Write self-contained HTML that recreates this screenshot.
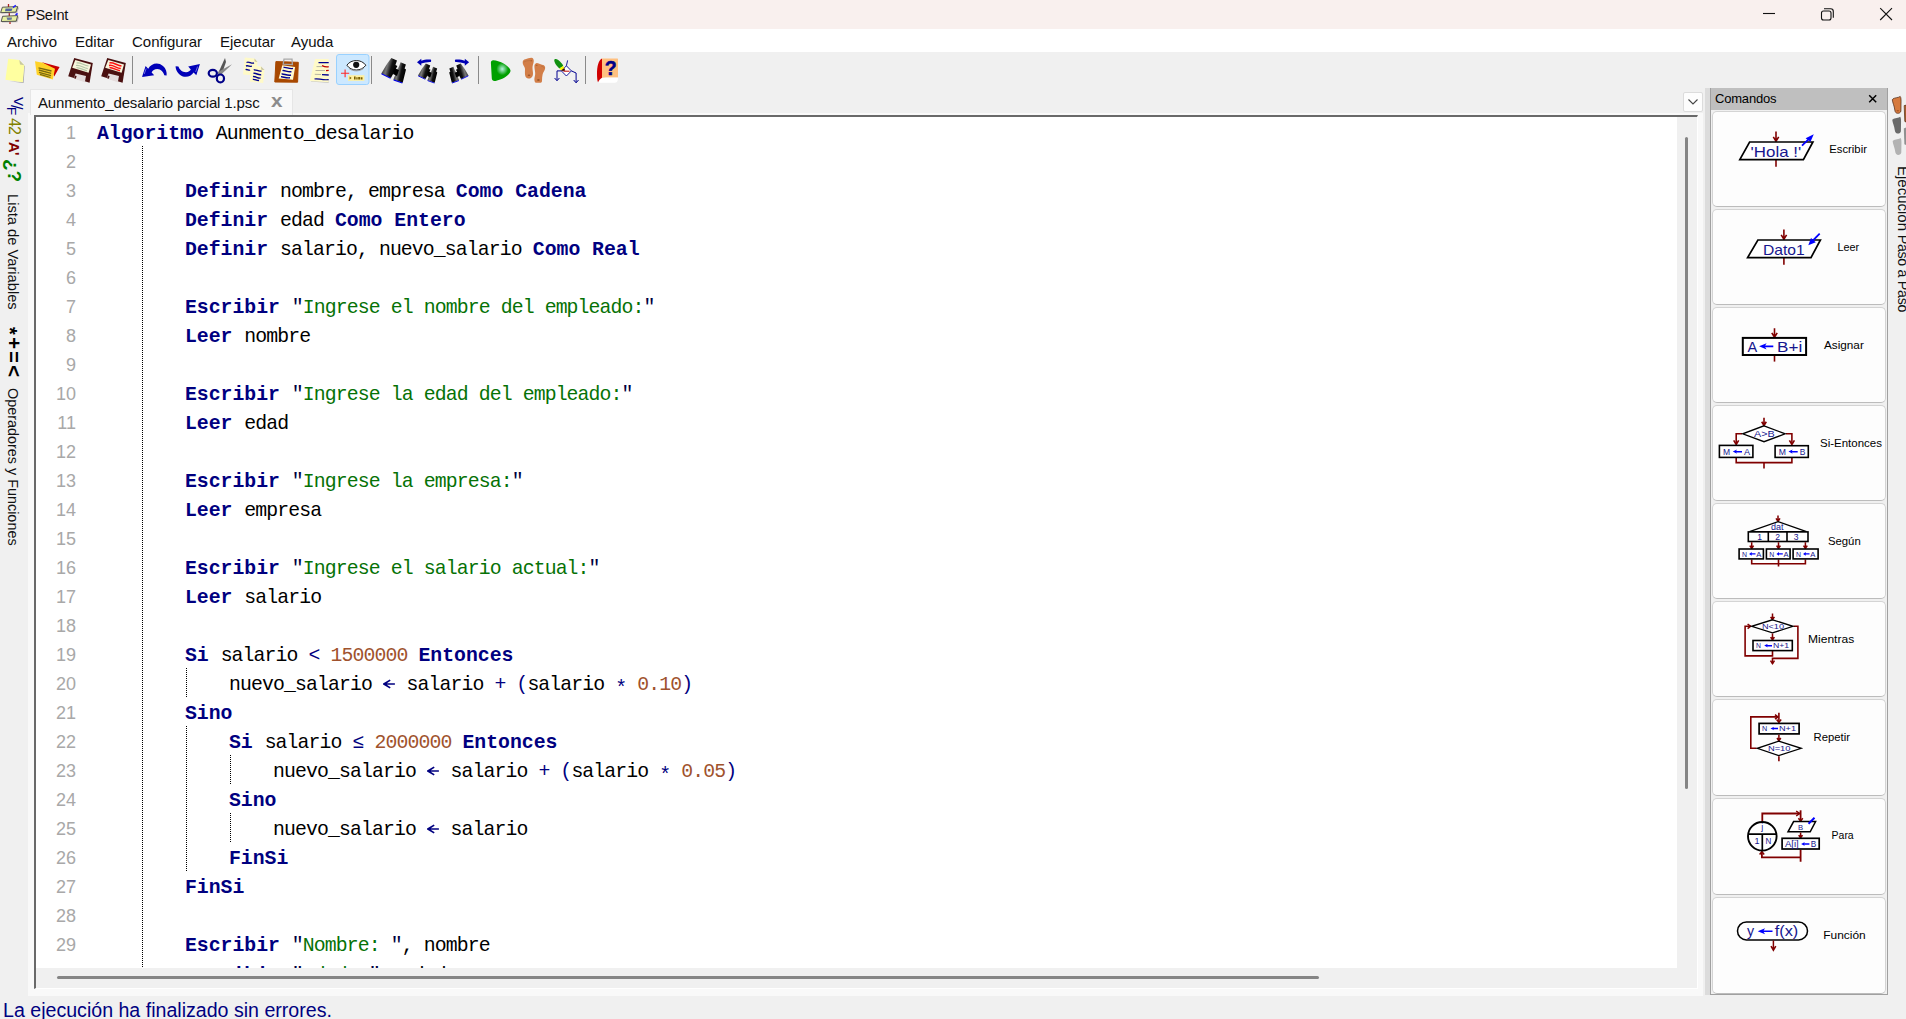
<!DOCTYPE html>
<html>
<head>
<meta charset="utf-8">
<title>PSeInt</title>
<style>
html,body{margin:0;padding:0;overflow:hidden;width:1906px;height:1019px;}
#root{position:absolute;left:0;top:0;width:1906px;height:1019px;overflow:hidden;background:#f0f0f0;}
body{width:1906px;height:1019px;overflow:hidden;background:#f0f0f0;font-family:"Liberation Sans",sans-serif;position:relative;color:#000;}
div,span{box-sizing:border-box;}
.abs{position:absolute;}
/* title bar */
#title{position:absolute;left:0;top:0;width:1906px;height:29px;background:#f9f0ee;}
#title .t{position:absolute;left:26px;top:5.6px;font-size:14.6px;letter-spacing:-0.3px;line-height:19px;color:#111;}
/* menu */
#menu{position:absolute;left:0;top:29px;width:1906px;height:23px;background:#fff;}
#menu span{position:absolute;top:3px;font-size:15px;line-height:19px;color:#111;}
/* toolbar */
#tool{position:absolute;left:0;top:52px;width:1906px;height:36px;background:#f0f0f0;}
.sep{position:absolute;top:4px;width:1px;height:28px;background:#a0a0a0;}
.ic{position:absolute;top:6px;width:24px;height:24px;}
/* notebook */
#page{position:absolute;left:28px;top:113px;width:1675px;height:883px;background:#f9f9f9;}
#tab{position:absolute;left:30px;top:89px;width:263px;height:26px;background:#f9f9f9;border:1px solid #e6e6e6;border-bottom:none;}
#tab .t{position:absolute;left:7px;top:4px;font-size:15px;letter-spacing:-0.14px;line-height:18px;color:#111;white-space:nowrap;}
#tab .x{position:absolute;left:240px;top:2px;font-size:18px;line-height:18px;color:#8c8c8c;font-weight:bold;transform:scaleX(1.15);transform-origin:0 0;}
#ed{position:absolute;left:34px;top:115px;width:1664px;height:874px;border-top:2px solid #696969;border-left:2px solid #696969;border-right:1px solid #fff;border-bottom:1px solid #fff;background:#f0f0f0;overflow:hidden;}
#edw{position:absolute;left:0;top:0;width:1641px;height:851px;background:#fff;overflow:hidden;}
.ln{position:absolute;left:0;height:29px;width:1641px;white-space:nowrap;}
.no{position:absolute;left:0;top:1px;width:40px;text-align:right;font-family:"Liberation Sans",sans-serif;font-size:18px;line-height:29px;color:#a8a8a8;padding-top:1px;}
.tx{position:absolute;left:61px;top:0;font-family:"Liberation Mono",monospace;font-size:19.8px;line-height:29px;letter-spacing:-0.88px;height:29px;padding-top:3px;}
.tx span{display:inline-block;vertical-align:top;height:29px;}
.sp{display:inline-block;height:1px;}
.k{font-weight:bold;color:#000080;letter-spacing:0;}
.i{color:#000;}
.g{color:#067206;}
.q{color:#000040;}
.n{color:#a0522d;}
.o{color:#000080;}
.ar{width:12.6px;position:relative;}
.st{color:#000080;position:relative;top:3.5px;}
.ar svg{position:absolute;left:0;top:7.6px;}
.guide{position:absolute;width:1px;background-image:linear-gradient(#000 50%,transparent 50%);background-size:1px 2px;}
/* scrollbars */
#vth{position:absolute;left:1649px;top:20px;width:3px;height:652px;background:#858585;border-radius:2px;}
#hth{position:absolute;left:21px;top:859px;width:1262px;height:3px;background:#858585;border-radius:2px;}
/* left sidebar */
.vt{position:absolute;transform-origin:0 0;transform:rotate(90deg);white-space:nowrap;}
/* status */
#status{position:absolute;left:3px;top:999px;font-size:19.6px;line-height:23px;color:#000080;white-space:nowrap;}
/* commands panel */
#split{position:absolute;left:1705px;top:88px;width:5px;height:907px;background:#dcdcdc;}
#cmd{position:absolute;left:1710px;top:88px;width:178px;height:907px;background:#f0f0f0;border-left:1px solid #a0a0a0;border-right:1px solid #a0a0a0;border-bottom:1px solid #a0a0a0;}
#cmdh{position:absolute;left:0;top:0;width:176px;height:22px;background:#bfbfbf;}
#cmdh .t{position:absolute;left:4px;top:3px;font-size:13px;line-height:16px;color:#000;letter-spacing:-0.2px;}
.cb{position:absolute;left:1px;width:174px;height:96px;background:#fdfdfd;border:1px solid #d4d4d4;border-bottom-color:#bcbcbc;border-radius:5px;}
.cb .l{position:absolute;top:29px;font-size:11.5px;line-height:14px;white-space:nowrap;color:#000;}
.cb svg{position:absolute;left:0;top:0;}
#dd{position:absolute;left:1683px;top:92px;width:20px;height:20px;background:#fdfdfd;border:1px solid #dcdcdc;border-radius:2px;}
</style>
</head>
<body>
<div id="root">
<div id="title"><span class="t">PSeInt</span>
<svg class="abs" style="left:0;top:0" width="24" height="29" viewBox="0 0 24 29">
<path d="M8.5 4 L8.5 7.4 M9.3 12.6 L9.3 16 M10 21.3 L10 24" stroke="#b02020" stroke-width="1.3"/>
<path d="M3.4 8.4 L19.2 7.6 L17 13.3 L1.6 13.6 Z" fill="#9a9a9a" opacity=".6"/>
<path d="M2.4 7.2 L17.7 6.6 L15.9 12.1 L0.6 12.7 Z" fill="#e6f0a0" stroke="#444" stroke-width="0.9"/>
<path d="M3.6 17.4 L19.2 16.6 L17.4 22.2 L2 22.5 Z" fill="#9a9a9a" opacity=".6"/>
<path d="M2.6 16.3 L17.7 15.6 L16.2 21.2 L1.2 21.5 Z" fill="#e6f0a0" stroke="#444" stroke-width="0.9"/>
<path d="M5.5 8.6 L12.5 8.4 L11.5 11 L5 11.2 Z" fill="#3040a0" opacity=".8"/>
<path d="M6.5 17.6 L12 17.4 L11.6 19.8 L7.4 20 Z" fill="#3040a0" opacity=".7"/>
<path d="M13 7.6 L15.8 5.2" stroke="#2020ff" stroke-width="1.5"/>
<path d="M15.6 15.2 L17.6 13.4" stroke="#2020ff" stroke-width="1.6"/>
</svg>
<svg class="abs" style="left:1750px;top:0" width="156" height="29" viewBox="1750 0 156 29">
<path d="M1763 13.5 L1775 13.5" stroke="#111" stroke-width="1.1"/>
<rect x="1821.5" y="11" width="9.5" height="9" rx="2" fill="none" stroke="#111" stroke-width="1.1"/>
<path d="M1824 8.8 L1830.6 8.8 C1832.2 8.8 1833.3 9.9 1833.3 11.5 L1833.3 17.8" fill="none" stroke="#111" stroke-width="1.1"/>
<path d="M1880.2 8.2 L1892 20 M1892 8.2 L1880.2 20" stroke="#111" stroke-width="1.1"/>
</svg>

</div>
<div id="menu"><span style="left:7px">Archivo</span><span style="left:75px">Editar</span><span style="left:132px">Configurar</span><span style="left:220px">Ejecutar</span><span style="left:291px">Ayuda</span></div>
<div id="tool">
<svg class="abs" style="left:0;top:0" width="640" height="38" viewBox="0 52 640 38">
<defs>
<linearGradient id="gb" x1="0" y1="0" x2="1" y2="0.35"><stop offset="0" stop-color="#000"/><stop offset="0.45" stop-color="#777"/><stop offset="0.7" stop-color="#111"/><stop offset="1" stop-color="#000"/></linearGradient>
<radialGradient id="gr" cx="0.58" cy="0.42" r="0.3"><stop offset="0" stop-color="#b8f0e0"/><stop offset="1" stop-color="#00a000"/></radialGradient>
</defs>
<!-- new -->
<path d="M9.2 81.2 L23.6 83 L24.8 66 L24 65.5 L22.6 82 Z" fill="#8a8a90" opacity=".7"/>
<path d="M8.2 58.8 L19.3 59.9 L24.3 65.2 L22.8 82.3 L5.4 79.8 Z" fill="#ffffa0"/>
<path d="M19.3 59.9 L24.3 65.2 L20 64.6 Z" fill="#c8c8a0"/>
<!-- open -->
<path d="M42 62.2 L59.6 67 L54.2 76.5 L52 70 Z" fill="#c80000"/>
<path d="M35 61.3 L42.8 62.7 L55 68.8 L52.8 79.5 L36.8 74.8 Z" fill="#ffd228"/>
<path d="M38.5 67.8 L51.5 71 M38.8 70 L51.2 73.3 M39 72.3 L51 75.6 M40 74.4 L50.5 77.5" stroke="#7a6a10" stroke-width="1.3" fill="none"/>
<!-- save -->
<g id="flop">
<path d="M74.2 58 L92.8 63 L89.6 82.7 L68.2 76.3 Z" fill="#4a1010"/>
<path d="M75.3 60 L91 64.5 L88.6 72.7 L72.2 67.8 Z" fill="#f7f5dc"/>
<path d="M75.6 73.6 L86 76 L84.8 82.2 L73.6 78.6 Z" fill="#e4dcdc"/>
<path d="M74.8 75.5 L76.6 76 L75.9 78.8 L74.1 78.2 Z" fill="#4a1010"/>
</g>
<path d="M76.5 63 C80 62 84 65.5 88.5 66 M76 65.5 C80 64.5 83 68 87.8 68.6 M76.5 67.6 C80 67.5 83 70 87 70.8" stroke="#b4c8a8" stroke-width="1.2" fill="none"/>
<!-- save as -->
<use href="#flop" x="33" y="0"/>
<path d="M109.5 63 C113 62 117 65.5 121.5 66 M109 65.5 C113 64.5 116 68 120.8 68.6 M109.5 67.6 C113 67.5 116 70 120 70.8" stroke="#ff1010" stroke-width="1.5" fill="none"/>
<rect x="132" y="56" width="1" height="28" fill="#8a8a8a"/>
<!-- undo -->
<path d="M142 77 L145.6 66 L148.2 68.8 C151 63.5 158 61.5 163 66 C166 68.5 167 72 166.6 75.5 L164.3 75.3 C163.5 72 161 69.2 157.3 69 C154.5 69 152.6 70.4 151.6 72.4 L154.2 75.2 Z" fill="#0000b8"/>
<path d="M144.2 74 L146.2 68.5" stroke="#6a6ae0" stroke-width="1" fill="none"/>
<!-- redo -->
<path d="M199.9 64.1 L196.3 75.2 L193.6 72.5 C190.5 77.5 183.5 78.5 179 74 C176.5 71.5 175.5 68.5 175.6 66.3 L178.4 66.5 C179.5 69.5 182 72.2 186 72.2 C188.5 72.2 190 71 190.8 69.6 L188.2 66.6 Z" fill="#0000b8"/>
<path d="M197.6 66.5 L195.6 72" stroke="#6a6ae0" stroke-width="1" fill="none"/>
<!-- cut -->
<path d="M218 73.5 L225 58 L226 62 L221.6 74.6 Z" fill="#555"/>
<path d="M217 72.5 L232 64.3 L229 67.2 L220.5 75 Z" fill="#888"/>
<ellipse cx="212.8" cy="73.2" rx="4.1" ry="3.4" fill="none" stroke="#000088" stroke-width="2.2"/>
<ellipse cx="220.4" cy="78.4" rx="3.6" ry="3.9" fill="none" stroke="#000088" stroke-width="2.2"/>
<!-- copy -->
<path d="M244.8 57.4 L254.5 58.5 L257.5 62 L256.6 75.5 L243 74.5 Z" fill="#fffac8"/>
<path d="M254.5 58.5 L257.5 62 L254.6 61.6 Z" fill="#c8c4a0"/>
<path d="M246.5 62.5 C249 61 251 64 254 63 M246 66 C248 65 250 67 252 66.2 M245.6 69.6 C247 69 249 70.6 250 70" stroke="#000090" stroke-width="1.4" fill="none"/>
<path d="M252 65.6 L261 66.6 L264.5 70 L263.2 83 L249.6 81.5 Z" fill="#fffac8"/>
<path d="M261 66.6 L264.5 70 L261.3 69.8 Z" fill="#c8c4a0"/>
<path d="M253.8 70 C256 69 258.5 72 261.5 71 M253.4 73.4 C256 72.5 258.5 75.5 261.2 74.6 M253 76.6 C255.5 76 258 78.8 260.6 78 M252.8 79.4 C255 79 257 81 259 80.4" stroke="#000090" stroke-width="1.4" fill="none"/>
<!-- paste -->
<path d="M275.9 61.6 L298.3 62.3 L297.6 82.2 L274.8 82 Z" fill="#a84800" stroke="#a84800" stroke-width="1" stroke-linejoin="round"/>
<path d="M282.3 65.2 L295.1 67 L293 79.8 L278.7 78.4 Z" fill="#fffad2"/>
<path d="M284 59.2 L292 59.2 L292.4 64.6 L283.2 64.2 Z" fill="none" stroke="#a8a8a8" stroke-width="1.3"/>
<path d="M283.5 67.5 C286 66.5 289 69.5 293 68.4 M282.5 70.6 C285 70 288 72.6 291.5 71.6 M281.6 74 C284 73.5 287 76 291 75 M281 76.8 C283 76.5 286 78.5 290 77.8" stroke="#000090" stroke-width="1.4" fill="none"/>
<!-- format -->
<path d="M311 81.6 L328.7 83 L328.7 81 L311 80 Z" fill="#b0b0b0" opacity=".7"/>
<path d="M315.1 59.1 L328.7 59.1 L328.7 82.3 L309.8 80.9 Z" fill="#fffac8"/>
<path d="M318.5 62.6 L328.7 62.6 M314.5 79 C318 78 322 80.5 328.7 79.6" stroke="#000090" stroke-width="1.2" fill="none"/>
<path d="M322 65.6 C324 66.5 326 67.4 328.7 66.6 M326 70.6 L328.7 70.4" stroke="#c00000" stroke-width="1.4" fill="none"/>
<path d="M316.5 66.6 L322 66.6 M315.5 70.5 L325 70.5 M314.8 74.3 L321 74.5" stroke="#b8b4a0" stroke-width="1" fill="none"/>
<path d="M322 74.6 L328.7 75" stroke="#000090" stroke-width="1.3" fill="none"/>
<!-- eye (selected) -->
<rect x="336.5" y="54.5" width="32.5" height="30" rx="2.5" fill="#cce8ff" stroke="#99d1ff" stroke-width="1"/>
<path d="M346.9 65.2 C351 59 361.5 59 365.8 65.2 C361.5 71.6 351 71.6 346.9 65.2 Z" fill="#fff" stroke="#222" stroke-width="1"/>
<path d="M349 68.4 C353 71.6 359.5 71.6 363.6 68.4" stroke="#999" stroke-width="1" fill="none"/>
<circle cx="356.2" cy="64.8" r="3.1" fill="#111"/>
<path d="M341 73.3 L349.2 73.3 M345.1 69.4 L345.1 77.2" stroke="#ff2828" stroke-width="1.1"/>
<rect x="348" y="75.2" width="16.4" height="5.6" fill="#fff0a0"/>
<path d="M349.6 76.6 L351.6 78 L349.6 79.4 Z M354 76.5 h1.6 v3 h-1.6 Z M356.3 77.3 h1.3 v2.2 h-1.3 Z M358.2 77 h2 v2.5 h-2 Z M360.8 77.3 h1.7 v2.2 h-1.7 Z" fill="#7a6000"/>
<rect x="371" y="56" width="1" height="28" fill="#8a8a8a"/>
<!-- find -->
<g id="bino">
<path d="M391.3 58 L397 60.6 L395.4 65 L397.4 66 L390.9 78 L381.3 73.4 L386 65.4 L388 62.6 Z" fill="url(#gb)"/>
<path d="M400.6 62.3 L405.9 64.5 L404.6 68.4 L406 69.4 L402.7 82.7 L393.4 79.5 L397.6 69 L399 66.4 Z" fill="url(#gb)"/>
<path d="M394 68 L399 70 L397 76 L393 74 Z" fill="#000"/>
<path d="M381.5 73.8 L390.6 78.2 M393.6 79.9 L402.4 83" stroke="#0000e0" stroke-width="1.2" fill="none"/>
</g>
<!-- find prev -->
<g transform="translate(418,63.5) scale(0.78) translate(-381.3,-58)">
<use href="#bino"/>
</g>
<path d="M417 62.3 L421.3 58.8 L421.3 60.8 C424 59.6 428 59.2 430.6 59.6 C431.4 60 431.4 61.6 430.6 62 C428 61.8 424 62.6 421.3 63.6 L421.3 65.8 Z" fill="#0000b4"/>
<!-- find next -->
<g transform="translate(468.5,63.5) scale(-0.78,0.78) translate(-381.3,-58)">
<use href="#bino"/>
</g>
<path d="M469.1 62.3 L464.8 58.8 L464.8 60.8 C462 59.6 458 59.2 455.5 59.6 C454.7 60 454.7 61.6 455.5 62 C458 61.8 462 62.6 464.8 63.6 L464.8 65.8 Z" fill="#0000b4"/>
<rect x="478" y="56" width="1" height="28" fill="#8a8a8a"/>
<!-- run -->
<path d="M493.4 60.3 C491.6 60.2 490.8 61.4 490.9 63 L491.8 78.6 C492 80.6 493.4 81.4 495.6 80.9 C502 79.4 507.6 76.4 510 72.4 C510.7 71.2 510.7 70.2 509.9 69 C506.6 64.4 499.6 60.8 493.4 60.3 Z" fill="url(#gr)"/>
<!-- step feet -->
<path d="M522.7 62.3 C522.6 60.6 524 59.6 525.3 59.3 C527.4 58.6 529.4 57.8 531.3 57.7 C533.2 57.8 534 59.6 533.7 61.7 C533.4 63.6 532.6 65.4 532.5 67.3 C532.4 69.6 533.1 71.8 533 74 C532.9 75.2 532.6 76.2 532 77 C531.3 77.9 530.4 78.5 529.3 78.5 C527.9 78.5 526.6 78 525.7 77 C524.6 75.2 525 71.6 525 69 C525 67.4 524 66.4 523.3 65 C522.9 64.2 522.7 63.2 522.7 62.3 Z" fill="#d27e48"/>
<path d="M536.7 63 C535.2 63.4 534.3 64.8 534.4 66.7 C534.5 69.2 535.3 71.6 535.2 74 C535.1 76 534.2 78 534.4 80 C534.6 81.6 535 82.6 536 82.7 L540.7 82.7 C541.6 82.4 542 81.6 542 80.7 C542 78.4 542.2 76.2 542.7 74 C543.2 72.2 544.6 70.8 545 69 C545.2 68.2 545.2 67.4 545 66.7 C544.6 65.4 543.4 64.9 542 64.7 C540.2 64.2 538.4 63 536.7 63 Z" fill="#d27e48"/>
<ellipse cx="529" cy="75.3" rx="1.3" ry="0.8" fill="#9a5426"/><ellipse cx="538.4" cy="80" rx="1.4" ry="0.8" fill="#8a4a20"/>
<ellipse cx="531.2" cy="60.7" rx="0.9" ry="0.8" fill="#b0602c"/><ellipse cx="536.7" cy="65.3" rx="1" ry="0.6" fill="#b0602c"/>
<path d="M523.6 62.2 C525.4 61 528 60.6 530 60.6 M541 66 C542.4 66.4 543.6 67 544.4 67.8" stroke="#b87040" stroke-width="0.7" fill="none"/>
<!-- flow -->
<path d="M566.4 65.8 L571.4 70.9 L566.4 76 L561.4 70.9 Z" fill="#fff" stroke="#000090" stroke-width="0.9"/>
<path d="M566.4 65.8 L567.6 60.4" stroke="#000090" stroke-width="0.9" fill="none"/>
<path d="M561.4 70.9 L557 70.9 L557 80 M571.4 70.9 L576.1 73 L576.1 82" stroke="#000090" stroke-width="1" fill="none"/>
<path d="M554.6 78 L557 80.8 L559.4 78 M573.7 80 L576.1 82.9 L578.5 80" stroke="#000090" stroke-width="1" fill="none"/>
<path d="M563.4 71.2 L569.6 71.2" stroke="#c00000" stroke-width="1"/>
<path d="M554.4 59.6 C556 58.4 558 59.6 560 61.6 C561.6 63.2 562.8 64.6 563.2 66 L559.4 68.4 C557.4 66.8 555.4 64.6 554.8 62.6 C554.5 61.6 554 60.4 554.4 59.6 Z" fill="#109010"/>
<path d="M559.4 68.4 L563.2 66 L564.4 68 L561.2 70.4 Z" fill="#f8f800"/>
<path d="M561.2 70.4 L564.4 68 L565.2 70.4 L563 71 Z" fill="#400000"/>
<rect x="585" y="56" width="1" height="28" fill="#8a8a8a"/>
<!-- help -->
<path d="M602 58.4 L617.2 58.4 C617.8 58.4 618 58.8 618 59.4 L618 77.8 L602 77.8 Z" fill="#ffc080"/>
<path d="M599.4 79.4 C601 77.6 604 77.6 618 77.6 C618 80 617.4 82.8 615 82.8 L599 82.8 Z" fill="#fff"/>
<path d="M602 58.4 C598.6 60 597 66 597 74 C597 78 597.4 81 598 82.2 C599 80.4 600.6 78.4 602 77.8 Z" fill="#d00000"/>
<text x="610.8" y="74.6" font-family="Liberation Sans, sans-serif" font-weight="bold" font-size="19.5" fill="#000088" stroke="#000088" stroke-width="0.5" text-anchor="middle">?</text>
</svg>

</div>
<div class="vt" style="left:27px;top:97px;height:18px;font-size:13.5px;line-height:18px;color:#000080;">V</div>
<div class="vt" style="left:25px;top:104.5px;height:18px;font-size:16px;line-height:18px;color:#000080;">/</div>
<div class="vt" style="left:20px;top:107px;height:18px;font-size:13.5px;line-height:18px;color:#000080;">F</div>
<div class="vt" style="left:23px;top:118px;height:18px;font-size:16px;line-height:18px;color:#808000;letter-spacing:-0.8px">42</div>
<div class="vt" style="left:23px;top:138.5px;height:18px;font-size:15px;line-height:18px;color:#800000;font-weight:bold;letter-spacing:-0.7px">'A'</div>
<div class="vt" style="left:23px;top:159px;height:18px;font-size:19px;line-height:18px;color:#008000;font-weight:bold;"><span style="position:relative;top:2px">¿</span>?</div>
<div class="vt" style="left:22px;top:194px;height:18px;font-size:14.7px;line-height:18px;color:#111;">Lista de Variables</div>
<div class="vt" style="left:23px;top:326.5px;height:18px;font-size:20px;line-height:18px;font-weight:bold;color:#000;letter-spacing:2.4px"><span style="position:relative;top:4px">*</span>+=&lt;</div>
<div class="vt" style="left:22px;top:388px;height:18px;font-size:14.4px;line-height:18px;color:#111;">Operadores y Funciones</div>

<div id="page"></div>
<div id="tab"><span class="t">Aunmento_desalario parcial 1.psc</span><span class="x">x</span></div>
<div id="dd"><svg width="18" height="18" viewBox="0 0 18 18" style="position:absolute;left:0;top:0"><path d="M4.5 6.5 L9 11 L13.5 6.5" fill="none" stroke="#444" stroke-width="1.1"/></svg></div>
<div id="ed">
 <div id="edw">
<div class="ln" style="top:0px"><span class="no">1</span><span class="tx"><span class="k">Algoritmo&nbsp;</span><span class="i">Aunmento_desalario</span></span></div>
<div class="ln" style="top:29px"><span class="no">2</span><span class="tx"></span></div>
<div class="ln" style="top:58px"><span class="no">3</span><span class="tx"><span class="sp" style="width:88px"></span><span class="k">Definir&nbsp;</span><span class="i">nombre,&nbsp;empresa&nbsp;</span><span class="k">Como&nbsp;Cadena</span></span></div>
<div class="ln" style="top:87px"><span class="no">4</span><span class="tx"><span class="sp" style="width:88px"></span><span class="k">Definir&nbsp;</span><span class="i">edad&nbsp;</span><span class="k">Como&nbsp;Entero</span></span></div>
<div class="ln" style="top:116px"><span class="no">5</span><span class="tx"><span class="sp" style="width:88px"></span><span class="k">Definir&nbsp;</span><span class="i">salario,&nbsp;nuevo_salario&nbsp;</span><span class="k">Como&nbsp;Real</span></span></div>
<div class="ln" style="top:145px"><span class="no">6</span><span class="tx"></span></div>
<div class="ln" style="top:174px"><span class="no">7</span><span class="tx"><span class="sp" style="width:88px"></span><span class="k">Escribir&nbsp;</span><span class="q">&quot;</span><span class="g">Ingrese&nbsp;el&nbsp;nombre&nbsp;del&nbsp;empleado:</span><span class="q">&quot;</span></span></div>
<div class="ln" style="top:203px"><span class="no">8</span><span class="tx"><span class="sp" style="width:88px"></span><span class="k">Leer&nbsp;</span><span class="i">nombre</span></span></div>
<div class="ln" style="top:232px"><span class="no">9</span><span class="tx"></span></div>
<div class="ln" style="top:261px"><span class="no">10</span><span class="tx"><span class="sp" style="width:88px"></span><span class="k">Escribir&nbsp;</span><span class="q">&quot;</span><span class="g">Ingrese&nbsp;la&nbsp;edad&nbsp;del&nbsp;empleado:</span><span class="q">&quot;</span></span></div>
<div class="ln" style="top:290px"><span class="no">11</span><span class="tx"><span class="sp" style="width:88px"></span><span class="k">Leer&nbsp;</span><span class="i">edad</span></span></div>
<div class="ln" style="top:319px"><span class="no">12</span><span class="tx"></span></div>
<div class="ln" style="top:348px"><span class="no">13</span><span class="tx"><span class="sp" style="width:88px"></span><span class="k">Escribir&nbsp;</span><span class="q">&quot;</span><span class="g">Ingrese&nbsp;la&nbsp;empresa:</span><span class="q">&quot;</span></span></div>
<div class="ln" style="top:377px"><span class="no">14</span><span class="tx"><span class="sp" style="width:88px"></span><span class="k">Leer&nbsp;</span><span class="i">empresa</span></span></div>
<div class="ln" style="top:406px"><span class="no">15</span><span class="tx"></span></div>
<div class="ln" style="top:435px"><span class="no">16</span><span class="tx"><span class="sp" style="width:88px"></span><span class="k">Escribir&nbsp;</span><span class="q">&quot;</span><span class="g">Ingrese&nbsp;el&nbsp;salario&nbsp;actual:</span><span class="q">&quot;</span></span></div>
<div class="ln" style="top:464px"><span class="no">17</span><span class="tx"><span class="sp" style="width:88px"></span><span class="k">Leer&nbsp;</span><span class="i">salario</span></span></div>
<div class="ln" style="top:493px"><span class="no">18</span><span class="tx"></span></div>
<div class="ln" style="top:522px"><span class="no">19</span><span class="tx"><span class="sp" style="width:88px"></span><span class="k">Si&nbsp;</span><span class="i">salario&nbsp;</span><span class="o">&lt;&nbsp;</span><span class="n">1500000&nbsp;</span><span class="k">Entonces</span></span></div>
<div class="ln" style="top:551px"><span class="no">20</span><span class="tx"><span class="sp" style="width:132px"></span><span class="i">nuevo_salario&nbsp;</span><span class="ar"><svg width="13" height="10" viewBox="0 0 13 10"><path d="M1 5 L11.9 5 M7.2 1.1 L1 5 L7.2 8.9" fill="none" stroke="#000080" stroke-width="1.7" stroke-linejoin="miter"/></svg></span><span class="i">&nbsp;salario&nbsp;</span><span class="o">+&nbsp;(</span><span class="i">salario&nbsp;</span><span class="st">*</span><span class="o">&nbsp;</span><span class="n">0.10</span><span class="o">)</span></span></div>
<div class="ln" style="top:580px"><span class="no">21</span><span class="tx"><span class="sp" style="width:88px"></span><span class="k">Sino</span></span></div>
<div class="ln" style="top:609px"><span class="no">22</span><span class="tx"><span class="sp" style="width:132px"></span><span class="k">Si&nbsp;</span><span class="i">salario&nbsp;</span><span class="o">≤&nbsp;</span><span class="n">2000000&nbsp;</span><span class="k">Entonces</span></span></div>
<div class="ln" style="top:638px"><span class="no">23</span><span class="tx"><span class="sp" style="width:176px"></span><span class="i">nuevo_salario&nbsp;</span><span class="ar"><svg width="13" height="10" viewBox="0 0 13 10"><path d="M1 5 L11.9 5 M7.2 1.1 L1 5 L7.2 8.9" fill="none" stroke="#000080" stroke-width="1.7" stroke-linejoin="miter"/></svg></span><span class="i">&nbsp;salario&nbsp;</span><span class="o">+&nbsp;(</span><span class="i">salario&nbsp;</span><span class="st">*</span><span class="o">&nbsp;</span><span class="n">0.05</span><span class="o">)</span></span></div>
<div class="ln" style="top:667px"><span class="no">24</span><span class="tx"><span class="sp" style="width:132px"></span><span class="k">Sino</span></span></div>
<div class="ln" style="top:696px"><span class="no">25</span><span class="tx"><span class="sp" style="width:176px"></span><span class="i">nuevo_salario&nbsp;</span><span class="ar"><svg width="13" height="10" viewBox="0 0 13 10"><path d="M1 5 L11.9 5 M7.2 1.1 L1 5 L7.2 8.9" fill="none" stroke="#000080" stroke-width="1.7" stroke-linejoin="miter"/></svg></span><span class="i">&nbsp;salario</span></span></div>
<div class="ln" style="top:725px"><span class="no">26</span><span class="tx"><span class="sp" style="width:132px"></span><span class="k">FinSi</span></span></div>
<div class="ln" style="top:754px"><span class="no">27</span><span class="tx"><span class="sp" style="width:88px"></span><span class="k">FinSi</span></span></div>
<div class="ln" style="top:783px"><span class="no">28</span><span class="tx"></span></div>
<div class="ln" style="top:812px"><span class="no">29</span><span class="tx"><span class="sp" style="width:88px"></span><span class="k">Escribir&nbsp;</span><span class="q">&quot;</span><span class="g">Nombre:&nbsp;</span><span class="q">&quot;</span><span class="i">,&nbsp;nombre</span></span></div>
<div class="ln" style="top:842px"><span class="no">30</span><span class="tx"><span class="sp" style="width:88px"></span><span class="k">Escribir&nbsp;</span><span class="q">&quot;</span><span class="g">Edad:&nbsp;</span><span class="q">&quot;</span><span class="i">,&nbsp;edad</span></span></div>
  <div class="guide" style="left:106px;top:29px;height:830px"></div>
  <div class="guide" style="left:150px;top:551px;height:29px"></div>
  <div class="guide" style="left:150px;top:609px;height:145px"></div>
  <div class="guide" style="left:194px;top:638px;height:29px"></div>
  <div class="guide" style="left:194px;top:696px;height:29px"></div>
 </div>
 <div id="vth"></div>
 <div id="hth"></div>
</div>
<div id="status">La ejecución ha finalizado sin errores.</div>
<div id="split"></div>
<div id="cmd">
 <div id="cmdh"><span class="t">Comandos</span>
 <svg width="10" height="10" viewBox="0 0 10 10" style="position:absolute;left:157px;top:6px"><path d="M1.2 1.2 L8.2 8.2 M8.2 1.2 L1.2 8.2" stroke="#000" stroke-width="1.5" fill="none"/></svg>
 </div>
<div class="cb" style="top:23px;height:96px"></div><div class="cb" style="top:121px;height:96px"></div><div class="cb" style="top:219px;height:96px"></div><div class="cb" style="top:317px;height:96px"></div><div class="cb" style="top:415px;height:96px"></div><div class="cb" style="top:513px;height:96px"></div><div class="cb" style="top:611px;height:97px"></div><div class="cb" style="top:710px;height:97px"></div><div class="cb" style="top:809px;height:97px"></div><svg class="abs" style="left:-1px;top:0" width="178" height="907" viewBox="1710 88 178 907">
<path d="M1776.0 131.4 L1776.0 141.2 M1773.3 136.8 L1776.0 141.2 L1778.7 136.8" stroke="#800000" stroke-width="1.6" fill="none"/>
<path d="M1776.0 160.0 L1776.0 166.8" stroke="#800000" stroke-width="1.6" fill="none"/>
<path d="M1749.6 142 L1812.9 142 L1803.4 159.6 L1739.8 159.6 Z" fill="#fff" stroke="#000" stroke-width="1.7"/>
<text x="1750.6" y="156.6" font-family="Liberation Sans, sans-serif" font-size="14.6" fill="#16168e" text-anchor="start" textLength="50.6" lengthAdjust="spacingAndGlyphs" >'Hola !'</text>
<path d="M1802 145.6 L1809.3 138.7" stroke="#0000ff" stroke-width="1.8" fill="none"/>
<path d="M1813.8 134.2 L1805.6 138.3 L1810.5 141.8 Z" fill="#0000ff"/>
<text x="1829.3" y="152.7" font-family="Liberation Sans, sans-serif" font-size="11.6" fill="#000" text-anchor="start" textLength="37.6" lengthAdjust="spacingAndGlyphs" >Escribir</text>
<path d="M1783.9 229.4 L1783.9 239.2 M1781.2 234.8 L1783.9 239.2 L1786.6 234.8" stroke="#800000" stroke-width="1.6" fill="none"/>
<path d="M1783.9 258.0 L1783.9 264.8" stroke="#800000" stroke-width="1.6" fill="none"/>
<path d="M1757.9 240 L1820.4 240 L1811 257.6 L1747.6 257.6 Z" fill="#fff" stroke="#000" stroke-width="1.7"/>
<text x="1763.0" y="254.6" font-family="Liberation Sans, sans-serif" font-size="14.6" fill="#16168e" text-anchor="start" textLength="41.8" lengthAdjust="spacingAndGlyphs" >Dato1</text>
<path d="M1819.7 233.7 L1812.5 240.8" stroke="#0000ff" stroke-width="1.8" fill="none"/>
<path d="M1808.3 245.2 L1811 237.9 L1815.8 242.3 Z" fill="#0000ff"/>
<text x="1837.4" y="250.7" font-family="Liberation Sans, sans-serif" font-size="11.6" fill="#000" text-anchor="start" textLength="21.6" lengthAdjust="spacingAndGlyphs" >Leer</text>
<path d="M1774.5 328.2 L1774.5 337.2 M1771.8 332.8 L1774.5 337.2 L1777.2 332.8" stroke="#800000" stroke-width="1.6" fill="none"/>
<path d="M1774.5 356.0 L1774.5 361.6" stroke="#800000" stroke-width="1.6" fill="none"/>
<rect x="1742.8" y="337.9" width="63.3" height="17.1" fill="#fff" stroke="#000" stroke-width="2"/>
<text x="1747.5" y="351.8" font-family="Liberation Sans, sans-serif" font-size="14.6" fill="#16168e" text-anchor="start" textLength="9.7" lengthAdjust="spacingAndGlyphs" >A</text>
<path d="M1759.1 346.3 L1766.6 343.2 L1765.1 345.4 L1773.3 345.4 L1773.3 347.2 L1765.1 347.2 L1766.6 349.4 Z" fill="#0000ff"/>
<text x="1777.0" y="351.8" font-family="Liberation Sans, sans-serif" font-size="14.6" fill="#16168e" text-anchor="start" textLength="25.2" lengthAdjust="spacingAndGlyphs" >B+i</text>
<text x="1824.0" y="348.7" font-family="Liberation Sans, sans-serif" font-size="11.6" fill="#000" text-anchor="start" textLength="39.8" lengthAdjust="spacingAndGlyphs" >Asignar</text>
<path d="M1764.0 417.8 L1764.0 425.4 M1761.7 421.8 L1764.0 425.4 L1766.3 421.8" stroke="#800000" stroke-width="1.6" fill="none"/>
<path d="M1742 433.8 L1736.2 433.8 L1736.2 444 M1786 433.8 L1791.9 433.8 L1791.9 444" stroke="#800000" stroke-width="1.6" fill="none"/>
<path d="M1733.7 440.4 L1736.2 444.4 L1738.7 440.4 M1789.4 440.4 L1791.9 444.4 L1794.4 440.4" stroke="#800000" stroke-width="1.6" fill="none"/>
<path d="M1764 425.8 L1785.2 433.8 L1764 441.7 L1742.7 433.8 Z" fill="#fff" stroke="#000" stroke-width="1.3"/>
<text x="1754.0" y="436.8" font-family="Liberation Sans, sans-serif" font-size="8.8" fill="#16168e" text-anchor="start" textLength="20.6" lengthAdjust="spacingAndGlyphs" >A&gt;B</text>
<path d="M1736.2 458 L1736.2 462.6 L1791.9 462.6 L1791.9 458 M1764 462.6 L1764 468.4" stroke="#800000" stroke-width="1.6" fill="none"/>
<rect x="1719.4" y="445.4" width="33.5" height="12" fill="#fff" stroke="#000" stroke-width="1.6"/>
<rect x="1775.1" y="445.7" width="33.2" height="11.7" fill="#fff" stroke="#000" stroke-width="1.6"/>
<text x="1722.9" y="454.8" font-family="Liberation Sans, sans-serif" font-size="9" fill="#16168e" text-anchor="start" textLength="7.1" lengthAdjust="spacingAndGlyphs" >M</text>
<path d="M1732.8 451.6 L1737.0 449.5 L1736.2 450.9 L1742.0 450.9 L1742.0 452.4 L1736.2 452.4 L1737.0 453.7 Z" fill="#0000ff"/>
<text x="1743.9" y="454.8" font-family="Liberation Sans, sans-serif" font-size="9" fill="#16168e" text-anchor="start" textLength="6.1" lengthAdjust="spacingAndGlyphs" >A</text>
<text x="1778.7" y="454.8" font-family="Liberation Sans, sans-serif" font-size="9" fill="#16168e" text-anchor="start" textLength="7.2" lengthAdjust="spacingAndGlyphs" >M</text>
<path d="M1788.5 451.6 L1792.7 449.5 L1791.9 450.9 L1797.7 450.9 L1797.7 452.4 L1791.9 452.4 L1792.7 453.7 Z" fill="#0000ff"/>
<text x="1799.7" y="454.8" font-family="Liberation Sans, sans-serif" font-size="9" fill="#16168e" text-anchor="start" textLength="5.6" lengthAdjust="spacingAndGlyphs" >B</text>
<text x="1820.0" y="446.5" font-family="Liberation Sans, sans-serif" font-size="11.6" fill="#000" text-anchor="start" textLength="61.9" lengthAdjust="spacingAndGlyphs" >Si-Entonces</text>
<path d="M1778.0 515.4 L1778.0 521.4 M1776.0 518.4 L1778.0 521.4 L1780.0 518.4" stroke="#800000" stroke-width="1.5" fill="none"/>
<path d="M1778 521.6 L1806.5 531.6 L1749.5 531.6 Z" fill="#fff" stroke="#000" stroke-width="1.3"/>
<rect x="1748.3" y="531.9" width="59.7" height="9.6" fill="#fff" stroke="#000" stroke-width="1.6"/>
<path d="M1768.3 531.9 L1768.3 541.5 M1787 531.9 L1787 541.5" stroke="#000" stroke-width="1.6"/>
<text x="1771.1" y="530.2" font-family="Liberation Sans, sans-serif" font-size="8.2" fill="#16168e" text-anchor="start" textLength="12.5" lengthAdjust="spacingAndGlyphs" >dat</text>
<text x="1759.6" y="539.9" font-family="Liberation Sans, sans-serif" font-size="8.6" fill="#16168e" text-anchor="middle" >1</text>
<text x="1777.7" y="539.9" font-family="Liberation Sans, sans-serif" font-size="8.6" fill="#16168e" text-anchor="middle" >2</text>
<text x="1796.2" y="539.9" font-family="Liberation Sans, sans-serif" font-size="8.6" fill="#16168e" text-anchor="middle" >3</text>
<path d="M1751.7 542.3 L1751.7 548.4 M1749.8 545.6 L1751.7 548.4 L1753.6 545.6" stroke="#800000" stroke-width="1.5" fill="none"/>
<path d="M1778.5 542.3 L1778.5 548.4 M1776.6 545.6 L1778.5 548.4 L1780.4 545.6" stroke="#800000" stroke-width="1.5" fill="none"/>
<path d="M1805.4 542.3 L1805.4 548.4 M1803.5 545.6 L1805.4 548.4 L1807.3 545.6" stroke="#800000" stroke-width="1.5" fill="none"/>
<path d="M1751.7 559.5 L1751.7 563.7 L1805.4 563.7 L1805.4 559.5 M1778.5 559.5 L1778.5 566.4" stroke="#800000" stroke-width="1.6" fill="none"/>
<rect x="1739.1" y="549" width="24.3" height="9.9" fill="#fff" stroke="#000" stroke-width="1.6"/>
<text x="1742.0" y="556.5" font-family="Liberation Sans, sans-serif" font-size="7.6" fill="#16168e" text-anchor="start" textLength="5.0" lengthAdjust="spacingAndGlyphs" >N</text>
<path d="M1749.1 553.9 L1751.7 552 L1751.7 553.2 L1755.5 553.2 L1755.5 554.6 L1751.7 554.6 L1751.7 555.8 Z" fill="#0000ff"/>
<text x="1756.3" y="556.5" font-family="Liberation Sans, sans-serif" font-size="7.6" fill="#16168e" text-anchor="start" textLength="5.1" lengthAdjust="spacingAndGlyphs" >A</text>
<rect x="1766.4" y="549" width="23.7" height="9.9" fill="#fff" stroke="#000" stroke-width="1.6"/>
<text x="1769.3" y="556.5" font-family="Liberation Sans, sans-serif" font-size="7.6" fill="#16168e" text-anchor="start" textLength="5.0" lengthAdjust="spacingAndGlyphs" >N</text>
<path d="M1776.4 553.9 L1779.0 552 L1779.0 553.2 L1782.8 553.2 L1782.8 554.6 L1779.0 554.6 L1779.0 555.8 Z" fill="#0000ff"/>
<text x="1783.6" y="556.5" font-family="Liberation Sans, sans-serif" font-size="7.6" fill="#16168e" text-anchor="start" textLength="5.1" lengthAdjust="spacingAndGlyphs" >A</text>
<rect x="1793.1" y="549" width="25.0" height="9.9" fill="#fff" stroke="#000" stroke-width="1.6"/>
<text x="1796.0" y="556.5" font-family="Liberation Sans, sans-serif" font-size="7.6" fill="#16168e" text-anchor="start" textLength="5.0" lengthAdjust="spacingAndGlyphs" >N</text>
<path d="M1803.1 553.9 L1805.7 552 L1805.7 553.2 L1809.5 553.2 L1809.5 554.6 L1805.7 554.6 L1805.7 555.8 Z" fill="#0000ff"/>
<text x="1810.3" y="556.5" font-family="Liberation Sans, sans-serif" font-size="7.6" fill="#16168e" text-anchor="start" textLength="5.1" lengthAdjust="spacingAndGlyphs" >A</text>
<text x="1827.9" y="544.5" font-family="Liberation Sans, sans-serif" font-size="11.6" fill="#000" text-anchor="start" textLength="32.8" lengthAdjust="spacingAndGlyphs" >Seg&#250;n</text>
<path d="M1772.5 613.6 L1772.5 619.6 M1770.6 616.8 L1772.5 619.6 L1774.4 616.8" stroke="#800000" stroke-width="1.5" fill="none"/>
<path d="M1772.5 651 L1772.5 655.9 L1745.1 655.9 L1745.1 626.3 L1751 626.3" stroke="#800000" stroke-width="1.6" fill="none"/>
<path d="M1747.6 624 L1750.6 626.3 L1747.6 628.6" stroke="#800000" stroke-width="1.5" fill="none"/>
<path d="M1793.6 626.3 L1797.9 626.3 L1797.9 658.4 L1772.5 658.4 L1772.5 663.4" stroke="#800000" stroke-width="1.6" fill="none"/>
<path d="M1770.5 660.6 L1772.5 663.6 L1774.5 660.6" stroke="#800000" stroke-width="1.5" fill="none"/>
<path d="M1772.5 619.8 L1793 626.3 L1772.5 632.9 L1751.6 626.3 Z" fill="#fff" stroke="#000" stroke-width="1.3"/>
<path d="M1772.5 633.5 L1772.5 640.0 M1770.6 637.2 L1772.5 640.0 L1774.4 637.2" stroke="#800000" stroke-width="1.5" fill="none"/>
<rect x="1753" y="640.5" width="39.3" height="10.1" fill="#fff" stroke="#000" stroke-width="1.6"/>
<text x="1761.9" y="629.1" font-family="Liberation Sans, sans-serif" font-size="7.8" fill="#16168e" text-anchor="start" textLength="22.1" lengthAdjust="spacingAndGlyphs" >N&lt;10</text>
<text x="1755.9" y="648.3" font-family="Liberation Sans, sans-serif" font-size="7.8" fill="#16168e" text-anchor="start" textLength="4.9" lengthAdjust="spacingAndGlyphs" >N</text>
<path d="M1764.2 645.6 L1767.8 643.8 L1767.1 644.9 L1772.0 644.9 L1772.0 646.4 L1767.1 646.4 L1767.8 647.4 Z" fill="#0000ff"/>
<text x="1772.9" y="648.3" font-family="Liberation Sans, sans-serif" font-size="7.8" fill="#16168e" text-anchor="start" textLength="16.2" lengthAdjust="spacingAndGlyphs" >N+1</text>
<text x="1808.0" y="642.5" font-family="Liberation Sans, sans-serif" font-size="11.6" fill="#000" text-anchor="start" textLength="46.2" lengthAdjust="spacingAndGlyphs" >Mientras</text>
<path d="M1778.9 712.8 L1778.9 722.5" stroke="#800000" stroke-width="1.6" fill="none"/>
<path d="M1776.6 719.6 L1778.9 722.4 L1781.2 719.6" stroke="#800000" stroke-width="1.5" fill="none"/>
<path d="M1756.5 748.3 L1750.8 748.3 L1750.8 716.9 L1778 716.9" stroke="#800000" stroke-width="1.6" fill="none"/>
<path d="M1775 714.6 L1778 716.9 L1775 719.2" stroke="#800000" stroke-width="1.5" fill="none"/>
<rect x="1759.1" y="723.4" width="40" height="10.5" fill="#fff" stroke="#000" stroke-width="1.7"/>
<path d="M1778.9 734.7 L1778.9 740.8 M1777.0 738.0 L1778.9 740.8 L1780.8 738.0" stroke="#800000" stroke-width="1.5" fill="none"/>
<path d="M1778.7 741.2 L1801.2 748.3 L1778.7 755.5 L1757.3 748.3 Z" fill="#fff" stroke="#000" stroke-width="1.3"/>
<path d="M1778.9 756.2 L1778.9 761.2" stroke="#800000" stroke-width="1.6" fill="none"/>
<text x="1761.9" y="731.2" font-family="Liberation Sans, sans-serif" font-size="7.8" fill="#16168e" text-anchor="start" textLength="5.2" lengthAdjust="spacingAndGlyphs" >N</text>
<path d="M1770.5 728.5 L1774.1 726.7 L1773.4 727.8 L1778.0 727.8 L1778.0 729.2 L1773.4 729.2 L1774.1 730.3 Z" fill="#0000ff"/>
<text x="1779.0" y="731.2" font-family="Liberation Sans, sans-serif" font-size="7.8" fill="#16168e" text-anchor="start" textLength="17.0" lengthAdjust="spacingAndGlyphs" >N+1</text>
<text x="1767.9" y="750.6" font-family="Liberation Sans, sans-serif" font-size="7.8" fill="#16168e" text-anchor="start" textLength="22.6" lengthAdjust="spacingAndGlyphs" >N=10</text>
<text x="1813.6" y="740.5" font-family="Liberation Sans, sans-serif" font-size="11.6" fill="#000" text-anchor="start" textLength="36.4" lengthAdjust="spacingAndGlyphs" >Repetir</text>
<path d="M1762.3 822 L1762.3 813.5 L1799.6 813.5" stroke="#800000" stroke-width="1.8" fill="none"/>
<path d="M1796.2 811 L1799.6 813.5 L1796.2 816" stroke="#800000" stroke-width="1.5" fill="none"/>
<path d="M1800.6 810.3 L1800.6 821.0" stroke="#800000" stroke-width="1.8" fill="none"/>
<path d="M1798.4 818.2 L1800.6 821 L1802.8 818.2" stroke="#800000" stroke-width="1.5" fill="none"/>
<path d="M1800.6 849.8 L1800.6 861.8 M1800.6 857.4 L1761.9 857.4 L1761.9 851.6" stroke="#800000" stroke-width="1.8" fill="none"/>
<path d="M1759.6 854.6 L1761.9 851.8 L1764.2 854.6" stroke="#800000" stroke-width="1.5" fill="none"/>
<circle cx="1762.3" cy="836.3" r="14.3" fill="#fff" stroke="#000" stroke-width="1.9"/>
<path d="M1748 834.1 L1776.6 834.1 M1762.3 834.1 L1762.3 850.6" stroke="#000" stroke-width="1.7"/>
<text x="1762.3" y="830.3" font-family="Liberation Sans, sans-serif" font-size="9" fill="#16168e" text-anchor="middle" >j</text>
<text x="1754.6" y="843.6" font-family="Liberation Sans, sans-serif" font-size="9" fill="#16168e" text-anchor="start" >1</text>
<text x="1765.4" y="843.6" font-family="Liberation Sans, sans-serif" font-size="9" fill="#16168e" text-anchor="start" textLength="5.8" lengthAdjust="spacingAndGlyphs" >N</text>
<path d="M1793.6 821.6 L1815.6 821.6 L1810.2 831.8 L1788 831.8 Z" fill="#fff" stroke="#000" stroke-width="1.5"/>
<text x="1797.9" y="829.5" font-family="Liberation Sans, sans-serif" font-size="7.8" fill="#16168e" text-anchor="start" textLength="5.1" lengthAdjust="spacingAndGlyphs" >B</text>
<path d="M1800.6 832.5 L1800.6 838.0 M1798.7 835.2 L1800.6 838.0 L1802.5 835.2" stroke="#800000" stroke-width="1.5" fill="none"/>
<rect x="1782.1" y="838.3" width="37.1" height="10.7" fill="#fff" stroke="#000" stroke-width="1.7"/>
<text x="1784.9" y="846.8" font-family="Liberation Sans, sans-serif" font-size="8.2" fill="#16168e" text-anchor="start" textLength="13.9" lengthAdjust="spacingAndGlyphs" >A[i]</text>
<path d="M1801.1 844.0 L1804.9 842.1 L1804.1 843.2 L1809.4 843.2 L1809.4 844.8 L1804.1 844.8 L1804.9 845.9 Z" fill="#0000ff"/>
<text x="1810.8" y="846.8" font-family="Liberation Sans, sans-serif" font-size="8.2" fill="#16168e" text-anchor="start" textLength="5.5" lengthAdjust="spacingAndGlyphs" >B</text>
<path d="M1814.5 817.7 L1808.5 823.7" stroke="#0000ff" stroke-width="2" fill="none"/>
<text x="1831.6" y="839.4" font-family="Liberation Sans, sans-serif" font-size="11.6" fill="#000" text-anchor="start" textLength="22.1" lengthAdjust="spacingAndGlyphs" >Para</text>
<rect x="1737.5" y="922" width="70" height="17.9" rx="8.95" fill="#fff" stroke="#000" stroke-width="1.5"/>
<path d="M1773.4 940.6 L1773.4 950.2 M1771.0 946.2 L1773.4 950.2 L1775.8 946.2" stroke="#800000" stroke-width="1.5" fill="none"/>
<text x="1746.9" y="935.5" font-family="Liberation Sans, sans-serif" font-size="14.6" fill="#16168e" text-anchor="start" textLength="7.1" lengthAdjust="spacingAndGlyphs" >y</text>
<path d="M1757.7 931.2 L1765.1 928.2 L1763.6 930.4 L1772.5 930.4 L1772.5 932.0 L1763.6 932.0 L1765.1 934.2 Z" fill="#0000ff"/>
<text x="1774.8" y="935.5" font-family="Liberation Sans, sans-serif" font-size="14.6" fill="#16168e" text-anchor="start" textLength="23.5" lengthAdjust="spacingAndGlyphs" >f(x)</text>
<text x="1823.3" y="938.8" font-family="Liberation Sans, sans-serif" font-size="11.6" fill="#000" text-anchor="start" textLength="42.4" lengthAdjust="spacingAndGlyphs" >Funci&#243;n</text>
</svg>
</div>
<svg class="abs" style="left:1888px;top:90px" width="18" height="70" viewBox="1888 90 18 70">
<defs><path id="ft" d="M1892.3 99.8 C1892.5 98.3 1896 97.8 1898.8 97.2 L1900.2 96.4 C1901 97.2 1901.2 100 1901 104 L1900.9 111 C1900.7 112.6 1899.2 113.4 1897.5 113.3 C1895.9 113.2 1895 112 1894.8 110 C1894.4 106 1892.4 102.2 1892.3 99.8 Z"/></defs>
<use href="#ft" fill="#d67a3e" stroke="#4a2410" stroke-width="0.7"/>
<ellipse cx="1897.8" cy="110.8" rx="1.3" ry="0.8" fill="#a85424"/>
<use href="#ft" y="20.3" fill="#6a6a6a"/>
<use href="#ft" x="0.4" y="41.6" fill="#b2b2b2"/>
<path d="M1904.2 105.6 L1906 105.2 L1906 122 L1904.8 121.4 Z" fill="#d67a3e" stroke="#4a2410" stroke-width="0.7"/>
<path d="M1903.8 128.6 L1906 127.6 L1906 145 L1904.4 144.2 Z" fill="#909090"/>
</svg>
<div class="vt" style="left:1912.2px;top:166px;height:18px;font-size:15px;line-height:18px;color:#111;">Ejecución<span style="font-size:14.3px;letter-spacing:-0.33px"> Paso a Paso</span></div>

</div>
</body>
</html>
